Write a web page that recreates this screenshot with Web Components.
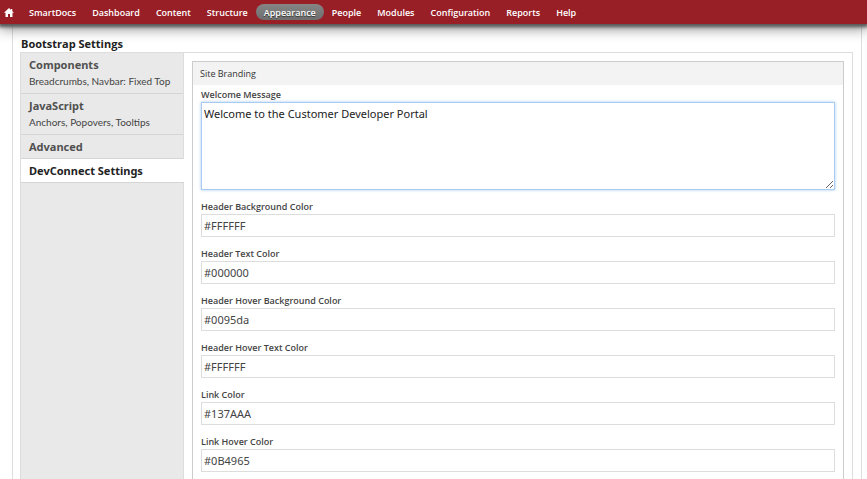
<!DOCTYPE html>
<html lang="en">
<head>
<meta charset="utf-8">
<title>Bootstrap Settings</title>
<style>
html { height: 100%; }
body { margin: 0; min-height: 100%; display: flex; flex-direction: column; background: #fff; color: #333; font-family: "Noto Sans", "Open Sans", sans-serif; font-size: 10px; }
</style>
</head>
<body>
<admin-toolbar>
  <admin-link home>Home</admin-link>
  <admin-link>SmartDocs</admin-link>
  <admin-link>Dashboard</admin-link>
  <admin-link>Content</admin-link>
  <admin-link>Structure</admin-link>
  <admin-link active>Appearance</admin-link>
  <admin-link>People</admin-link>
  <admin-link>Modules</admin-link>
  <admin-link>Configuration</admin-link>
  <admin-link>Reports</admin-link>
  <admin-link>Help</admin-link>
</admin-toolbar>
<settings-page heading="Bootstrap Settings">
  <settings-tab slot="tabs" label="Components">Breadcrumbs, Navbar: Fixed Top</settings-tab>
  <settings-tab slot="tabs" label="JavaScript">Anchors, Popovers, Tooltips</settings-tab>
  <settings-tab slot="tabs" label="Advanced"></settings-tab>
  <settings-tab slot="tabs" label="DevConnect Settings" selected></settings-tab>
  <settings-panel legend="Site Branding">
    <text-field label="Welcome Message" value="Welcome to the Customer Developer Portal" multiline></text-field>
    <text-field label="Header Background Color" value="#FFFFFF"></text-field>
    <text-field label="Header Text Color" value="#000000"></text-field>
    <text-field label="Header Hover Background Color" value="#0095da"></text-field>
    <text-field label="Header Hover Text Color" value="#FFFFFF"></text-field>
    <text-field label="Link Color" value="#137AAA"></text-field>
    <text-field label="Link Hover Color" value="#0B4965"></text-field>
  </settings-panel>
</settings-page>

<script>
class BaseElement extends HTMLElement {
  connectedCallback() {
    if (!this.shadowRoot) this.attachShadow({ mode: "open" }).innerHTML = this.render();
  }
  attr(name) { return this.getAttribute(name) || ""; }
}

customElements.define("admin-toolbar", class extends BaseElement {
  render() {
    return `<style>
      :host { display: block; position: relative; z-index: 1; background: #991f27; box-shadow: 0 2px 3px 1px #5a5a5a, 0 3px 14px 1px rgba(0,0,0,.5); }
      nav { display: flex; align-items: center; height: 24px; }
    </style><nav aria-label="Administration"><slot></slot></nav>`;
  }
});

customElements.define("admin-link", class extends BaseElement {
  render() {
    const home = this.hasAttribute("home");
    const body = home
      ? `<svg width="10" height="9" viewBox="0 0 10 9" aria-label="Home"><path d="M5 0 0 4.8h1.5V9H4V6h2v3h2.5V4.8H10L8.3 3.2V1H7v.9z" fill="#fff"/></svg>`
      : `<slot></slot>`;
    return `<style>
      :host { display: block; }
      a { display: flex; align-items: center; height: 16px; padding: 0 8px; border-radius: 8px; color: #fff; font-family: "Open Sans", sans-serif; font-size: 9px; font-weight: 600; text-decoration: none; }
      a.home { padding: 0 7px 0 4px; }
      a.active { background: linear-gradient(#858585, #6e6e6e); text-shadow: 0 1px 1px #333; }
    </style><a href="#" class="${home ? "home" : ""} ${this.hasAttribute("active") ? "active" : ""}">${body}</a>`;
  }
});

customElements.define("settings-page", class extends BaseElement {
  render() {
    return `<style>
      :host { display: flex; flex: 1; flex-direction: column; margin: 0 5px 0 12px; padding: 12px 8px 0 7px; border: solid #ddd; border-width: 0 1px; }
      h1 { margin: 0; padding-left: 1px; font-size: 11px; font-family: "Open Sans", sans-serif; line-height: 16px; color: #222; }
      .frame { display: flex; flex: 1; border: 1px solid #ddd; border-bottom: 0; }
      .tabs { width: 162px; border-right: 1px solid #ddd; background: #e9e9e9; }
      main { flex: 1; display: flex; flex-direction: column; padding: 8px 8px 0; }
    </style><h1>${this.attr("heading")}</h1>
    <div class="frame"><nav class="tabs" aria-label="Sections"><slot name="tabs"></slot></nav><main><slot></slot></main></div>`;
  }
});

customElements.define("settings-tab", class extends BaseElement {
  render() {
    return `<style>
      :host { display: block; border-bottom: 1px solid #d5d5d5; }
      :host([selected]) { background: #fff; margin-right: -1px; }
      a { display: block; padding: 4px 8px 3px; color: #505050; text-decoration: none; }
      strong { display: block; font-size: 11px; line-height: 16px; }
      small { display: block; font-family: Lato, sans-serif; font-size: 10px; line-height: 17px; color: #444; }
      small:empty { display: none; }
      :host([selected]) strong { color: #222; }
    </style><a href="#"><strong>${this.attr("label")}</strong><small>${this.textContent}</small></a>`;
  }
});

customElements.define("settings-panel", class extends BaseElement {
  render() {
    return `<style>
      :host { display: block; flex: 1; }
      fieldset { box-sizing: border-box; min-width: 0; height: 100%; margin: 0; padding: 0; border: 1px solid #ccc; border-bottom: 0; }
      legend { float: left; box-sizing: border-box; width: 100%; padding: 0 7px; background: #f3f3f3; font-family: "Open Sans", sans-serif; font-size: 9px; line-height: 23px; color: #333; }
      .fields { clear: both; display: grid; gap: 9px; padding: 2px 8px 6px; }
    </style><fieldset><legend>${this.attr("legend")}</legend><div class="fields"><slot></slot></div></fieldset>`;
  }
});

customElements.define("text-field", class extends BaseElement {
  render() {
    const value = this.attr("value");
    const control = this.hasAttribute("multiline")
      ? `<textarea id="control">${value}</textarea>`
      : `<input id="control" type="text" value="${value}">`;
    return `<style>
      :host { display: block; }
      label { display: block; font-family: "Open Sans", sans-serif; font-size: 9px; font-weight: 600; line-height: 15px; color: #444; }
      input, textarea { display: block; box-sizing: border-box; width: 100%; margin: 0; padding: 2px; border: 1px solid #ddd; border-radius: 0; outline: 0; background: #fff; color: #444; font: 11px/16px "Noto Sans", sans-serif; }
      input { height: 23px; }
      textarea { height: 88px; padding-top: 3px; border-color: #a9cbf2; box-shadow: 0 0 3px #a9cbf2; color: #222; resize: vertical; }
    </style><label for="control">${this.attr("label")}</label>${control}`;
  }
});
</script>
</body>
</html>
